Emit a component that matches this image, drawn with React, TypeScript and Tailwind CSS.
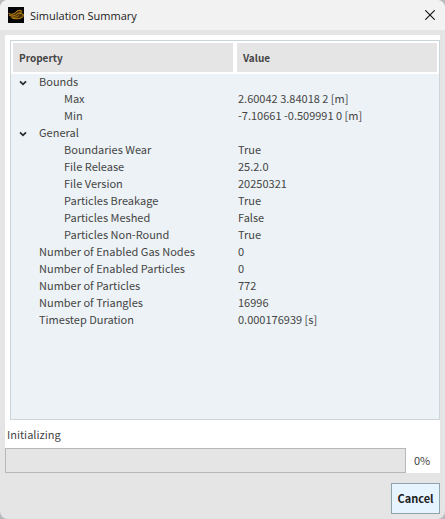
import { useState } from "react";

type Row = {
    name: string;
    value?: string;
    children?: Row[];
};

const SUMMARY: Row[] = [
    {
        name: "Bounds",
        children: [
            { name: "Max", value: "2.60042 3.84018 2 [m]" },
            { name: "Min", value: "-7.10661 -0.509991 0 [m]" }
        ]
    },
    {
        name: "General",
        children: [
            { name: "Boundaries Wear", value: "True" },
            { name: "File Release", value: "25.2.0" },
            { name: "File Version", value: "20250321" },
            { name: "Particles Breakage", value: "True" },
            { name: "Particles Meshed", value: "False" },
            { name: "Particles Non-Round", value: "True" }
        ]
    },
    { name: "Number of Enabled Gas Nodes", value: "0" },
    { name: "Number of Enabled Particles", value: "0" },
    { name: "Number of Particles", value: "772" },
    { name: "Number of Triangles", value: "16996" },
    { name: "Timestep Duration", value: "0.000176939 [s]" }
];

function AppIcon() {
    return (
        <svg viewBox="0 0 16 16" className="size-4 shrink-0" aria-hidden="true">
            <rect width="16" height="16" fill="#060606" />
            <path d="M0.500 6.500C3 7.500 5.500 7 7.500 5C9 3 12 2.500 13.500 3.500L13.800 6L15.500 7.500L15.200 10C12.500 12.500 8 12.500 5 11.200C3 10.300 1.500 9 0.500 6.500Z" fill="#4a3206" />
            <g fill="none" stroke="#bd8414" strokeLinecap="round">
                <path d="M0.800 6.600C3 7.800 5.500 7.600 7.500 5.500S11.500 2.800 13.400 3.700C14.300 5 13 6 11.500 6.500" strokeWidth="1" />
                <path d="M1.500 8.500C4.500 9.500 7.500 8.800 9 7.200S12.500 5.800 15 7.300" strokeWidth="0.900" />
                <path d="M3.200 10.200C6.500 10.800 9 10 10.500 8.800" strokeWidth="0.800" />
                <path d="M4.500 11.300C8.500 12.400 12.500 12 15.200 9.500V7.500" strokeWidth="1" />
            </g>
        </svg>
    );
}

function Chevron({ open }: { open: boolean }) {
    return (
        <svg viewBox="0 0 8 8" className={open ? "size-2" : "size-2 -rotate-90"} aria-hidden="true">
            <path d="M1 2.300L4 5.300L7 2.300" fill="none" stroke="#2b2b2b" strokeWidth="1.800" />
        </svg>
    );
}

function Group({ row }: { row: Row }) {
    const [open, setOpen] = useState(true);

    return (
        <>
            <tr className="h-[17px] align-top">
                <td className="p-0">
                    <div className="flex items-start">
                        <button
                            type="button"
                            onClick={() => setOpen(!open)}
                            aria-expanded={open}
                            aria-label={row.name}
                            className="flex h-[17px] w-7 items-center justify-center pr-1"
                        >
                            <Chevron open={open} />
                        </button>
                        <span>{row.name}</span>
                    </div>
                </td>
                <td className="p-0" />
            </tr>
            {open && row.children?.map((child) => (
                <tr key={child.name} className="h-[17px] align-top">
                    <td className="p-0 pl-[53px]">{child.name}</td>
                    <td className="p-0 pl-[3px]">{child.value}</td>
                </tr>
            ))}
        </>
    );
}

export default function App() {
    const progress = 0;

    return (
        <div className="min-h-screen bg-[#b9bcbf]">
            <div className="flex min-h-screen flex-col overflow-hidden rounded-lg bg-[#e5e5e5] font-['Noto_Sans_CJK_SC',sans-serif] text-[11px] leading-[15px] text-[#454545]">
                <header className="flex h-[30px] items-center bg-[#f2f2f2] pr-[7px] pl-2">
                    <AppIcon />
                    <h1 className="flex-1 pl-[6px] font-['Open_Sans',sans-serif] text-[11px] text-[#1a1a1a]">Simulation Summary</h1>
                    <button type="button" aria-label="Close" className="flex size-4 items-center justify-center">
                        <svg viewBox="0 0 10 10" className="size-[10px]" aria-hidden="true">
                            <path d="M0.300 0.300L9.700 9.700M9.700 0.300L0.300 9.700" stroke="#111" strokeWidth="1.100" />
                        </svg>
                    </button>
                </header>

                <main className="mx-[5px] mt-[5px] flex flex-1 flex-col bg-white">
                    <div className="mt-[5px] ml-[5px] flex-1 border border-[#cbd5da] bg-[#ecf2f5]">
                        <table className="w-full table-fixed border-separate border-spacing-0 text-left">
                            <colgroup>
                                <col className="w-[224px]" />
                                <col />
                            </colgroup>
                            <thead>
                                <tr className="h-[33px] text-[10px]">
                                    <th scope="col" className="border-2 border-white bg-[#e5e5e5] px-[6px] py-0 font-bold">Property</th>
                                    <th scope="col" className="border-2 border-white bg-[#e5e5e5] px-[6px] py-0 font-bold">Value</th>
                                </tr>
                            </thead>
                            <tbody>
                                {SUMMARY.map((row) =>
                                    row.children ? (
                                        <Group key={row.name} row={row} />
                                    ) : (
                                        <tr key={row.name} className="h-[17px] align-top">
                                            <td className="p-0 pl-7">{row.name}</td>
                                            <td className="p-0 pl-[3px]">{row.value}</td>
                                        </tr>
                                    )
                                )}
                            </tbody>
                        </table>
                    </div>

                    <p id="status" className="px-[2px] pt-[7px] pb-[6px]">Initializing</p>
                    <div className="flex items-center">
                        <div
                            role="progressbar"
                            aria-labelledby="status"
                            aria-valuenow={progress}
                            className="h-[25px] flex-1 border border-[#b5b8b8] bg-[#e5e5e5]"
                        >
                            <div className="h-full bg-[#8fb8d8]" style={{ width: `${progress}%` }} />
                        </div>
                        <span className="w-[34px] pl-2">{progress}%</span>
                    </div>
                </main>

                <footer className="flex justify-end px-[5px] pt-[10px] pb-[5px]">
                    <button type="button" className="h-[31px] w-[49px] border border-[#8fa3ad] bg-[#e6f4ff] text-[11px] font-bold text-[#1c1c1c]">
                        Cancel
                    </button>
                </footer>
            </div>
        </div>
    );
}
